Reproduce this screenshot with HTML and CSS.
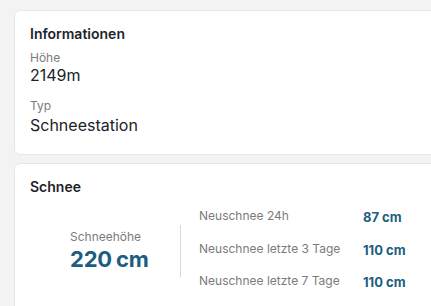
FILE: index.html
```html
<!DOCTYPE html>
<html lang="de">
<head>
<meta charset="utf-8">
<link rel="stylesheet" href="styles.css">
</head>
<body>
<div class="page">
  <section class="card info">
    <h2 class="card-title">Informationen</h2>
    <div class="field">
      <div class="label">Höhe</div>
      <div class="value">2149m</div>
    </div>
    <div class="field">
      <div class="label">Typ</div>
      <div class="value">Schneestation</div>
    </div>
  </section>
  <section class="card snow">
    <h2 class="card-title">Schnee</h2>
    <div class="snow-body">
      <div class="snow-main">
        <div class="snow-label">Schneehöhe</div>
        <div class="snow-total">220<span class="unit">cm</span></div>
      </div>
      <div class="snow-list">
        <div class="row-label">Neuschnee 24h</div>
        <div class="row-value">87<span class="unit-s">cm</span></div>
        <div class="row-label">Neuschnee letzte 3 Tage</div>
        <div class="row-value">110<span class="unit-s">cm</span></div>
        <div class="row-label">Neuschnee letzte 7 Tage</div>
        <div class="row-value">110<span class="unit-s">cm</span></div>
      </div>
    </div>
  </section>
</div>
</body>
</html>
```

FILE: styles.css
```css
* { box-sizing: border-box; }
html, body {
  margin: 0;
  padding: 0;
  background: #f3f3f3;
  font-family: Inter, "Noto Sans", sans-serif;
  color: #1f2328;
  overflow: hidden;
}
.page {
  padding: 10px 0 0 14px;
  display: flex;
  flex-direction: column;
  gap: 8px;
  width: 480px;
}
.card {
  background: #fff;
  border: 1px solid #e7e7e7;
  border-radius: 6px;
  padding: 13px 15px 16px;
}
.card-title {
  margin: 0;
  font-size: 14px;
  line-height: 20px;
  font-weight: 600;
  color: #1e232a;
}
.info { height: 145px; }
.field { display: flex; flex-direction: column; }
.info .card-title { margin-bottom: 7px; }
.label {
  font-size: 12px;
  line-height: 14px;
  color: #7b7b7b;
}
.value {
  font-size: 16px;
  line-height: 20px;
  color: #202328;
}
.field + .field { margin-top: 14px; }
.field + .field .value { margin-top: 2px; }

.snow { height: 160px; }
.snow-body {
  display: flex;
  align-items: flex-start;
  margin-top: 7px;
}
.snow-main {
  width: 151px;
  margin-top: 21px;
  padding: 4px 0 4px 40px;
  border-right: 1px solid #d8d8d8;
}
.snow-label {
  font-size: 12px;
  line-height: 16px;
  color: #7b7b7b;
}
.snow-total {
  font-size: 22px;
  line-height: 28px;
  font-weight: 700;
  color: #1d5d80;
  letter-spacing: -0.2px;
}
.unit { margin-left: 4px; }
.unit-s { margin-left: 3px; }
.snow-list {
  display: grid;
  grid-template-columns: 164px auto;
  row-gap: 9.5px;
  padding-left: 18px;
}
.row-label {
  font-size: 12px;
  line-height: 20px;
  color: #7b7b7b;
  padding-top: 2px;
}
.row-value {
  font-size: 13px;
  line-height: 20px;
  font-weight: 700;
  color: #1d5d80;
  padding-top: 3px;
}
```
